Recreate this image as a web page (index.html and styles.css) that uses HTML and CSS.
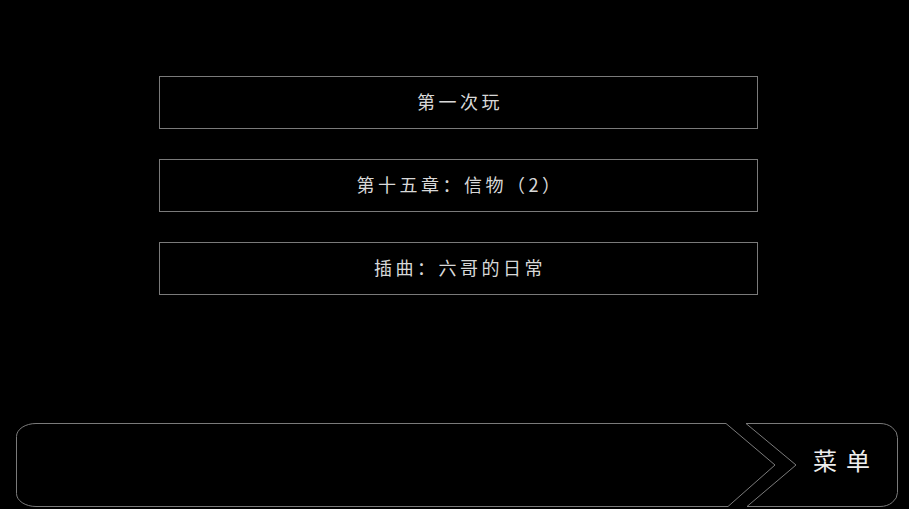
FILE: index.html
```html
<!DOCTYPE html>
<html lang="zh">
<head>
<meta charset="utf-8">
<link rel="stylesheet" href="styles.css">
</head>
<body>
<div class="screen">
  <div class="choices">
    <div class="choice">第一次玩</div>
    <div class="choice">第十五章：信物（2）</div>
    <div class="choice">插曲：六哥的日常</div>
  </div>
  <div class="quickbar">
    <svg class="bar-art" width="882" height="84" viewBox="0 0 882 84">
      <path d="M20 0.5 H710 L759 42 L712 83.5 H20 A19.5 13 0 0 1 0.5 70.5 V13.5 A19.5 13 0 0 1 20 0.5 Z" fill="none" stroke="#7a7a7a" stroke-width="1"/>
      <path d="M730 0.5 H864 A17.5 14 0 0 1 881.5 14.5 V69.5 A17.5 14 0 0 1 864 83.5 H731 L780 42 Z" fill="none" stroke="#7a7a7a" stroke-width="1"/>
    </svg>
    <div class="menu-label">菜单</div>
  </div>
</div>
</body>
</html>
```

FILE: styles.css
```css
html, body {
  margin: 0;
  padding: 0;
  background: #000;
}
.screen {
  width: 909px;
  height: 509px;
  display: flex;
  flex-direction: column;
  font-family: "Noto Sans CJK SC", "Noto Sans", sans-serif;
  color: #d8d8d8;
}
.choices {
  display: flex;
  flex-direction: column;
  gap: 30px;
  padding-top: 76px;
  margin-left: 159px;
  width: 599px;
}
.choice {
  box-sizing: border-box;
  height: 53px;
  border: 1px solid #7a7a7a;
  display: flex;
  align-items: center;
  justify-content: center;
  font-size: 18px;
  letter-spacing: 3.5px;
  padding-left: 3px;
  padding-bottom: 3px;
}
.quickbar {
  position: relative;
  margin-top: auto;
  margin-left: 16px;
  margin-bottom: 2px;
  width: 882px;
  height: 84px;
  display: flex;
  justify-content: flex-end;
  align-items: center;
}
.bar-art {
  position: absolute;
  left: 0;
  top: 0;
}
.menu-label {
  position: relative;
  font-size: 24px;
  letter-spacing: 9px;
  color: #eeeeee;
  margin-right: 19px;
  margin-top: -12px;
}
```
